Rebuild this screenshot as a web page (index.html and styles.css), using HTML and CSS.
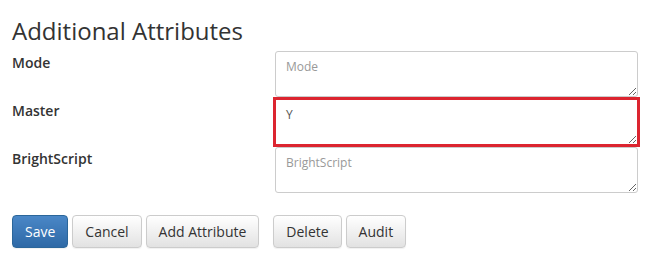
FILE: index.html
```html
<!DOCTYPE html>
<html>
<head>
<meta charset="utf-8">
<title>Additional Attributes</title>
<link rel="stylesheet" href="styles.css">
</head>
<body>
<div class="attr-panel">
  <h3 class="attr-title">Additional Attributes</h3>

  <div class="attr-rows">
    <div class="attr-row">
      <label class="attr-label" for="attr_mode">Mode</label>
      <textarea class="attr-input" id="attr_mode" placeholder="Mode"></textarea>
    </div>
    <div class="attr-row">
      <label class="attr-label" for="attr_master">Master</label>
      <textarea class="attr-input attr-input-error" id="attr_master" placeholder="Master">Y</textarea>
    </div>
    <div class="attr-row">
      <label class="attr-label" for="attr_bs">BrightScript</label>
      <textarea class="attr-input" id="attr_bs" placeholder="BrightScript"></textarea>
    </div>
  </div>

  <div class="attr-actions">
    <div class="btn-group">
      <button type="button" class="btn btn-primary">Save</button>
      <button type="button" class="btn">Cancel</button>
      <button type="button" class="btn">Add Attribute</button>
    </div>
    <div class="btn-group">
      <button type="button" class="btn">Delete</button>
      <button type="button" class="btn">Audit</button>
    </div>
  </div>
</div>
</body>
</html>
```

FILE: styles.css
```css
body{
	margin:0;
	background:#fff;
	font-family:"Open Sans", "Liberation Sans", sans-serif;
	color:#333;
}
.attr-panel{
	padding:15px 12px 10px 12px;
}
.attr-title{
	margin:0 0 4px 0;
	font-size:24px;
	font-weight:400;
	line-height:32px;
	color:#333;
}
.attr-rows{
	display:flex;
	flex-direction:column;
	gap:2px;
}
.attr-row{
	display:grid;
	grid-template-columns:263px 363px;
}
.attr-label{
	padding-top:2px;
	font-size:14px;
	font-weight:600;
	line-height:20px;
	color:#333;
}
.attr-input{
	box-sizing:border-box;
	height:46px;
	margin:0;
	padding:6px 10px 2px 10px;
	border:1px solid #ccc;
	border-radius:3px;
	font-family:inherit;
	font-size:12px;
	line-height:17px;
	color:#555;
	background:#fff;
	resize:vertical;
}
.attr-input::placeholder{
	color:#999;
}
.attr-input-error{
	border-color:#dc2530;
	border-radius:0;
	box-shadow:0 0 0 2px #dc2530;
}
.attr-actions{
	display:flex;
	gap:14px;
	margin-top:22px;
}
.btn-group{
	display:flex;
	gap:4px;
}
.btn{
	box-sizing:border-box;
	height:33px;
	padding:0 12px;
	border:1px solid #ccc;
	border-radius:4px;
	background:linear-gradient(#fff, #e2e2e2);
	font-family:inherit;
	font-size:14px;
	color:#333;
	box-shadow:0 1px 1px rgba(0,0,0,.06);
}
.btn-primary{
	border-color:#2b669a;
	background:linear-gradient(#4a87c7, #2e69a6);
	color:#fff;
}
```
